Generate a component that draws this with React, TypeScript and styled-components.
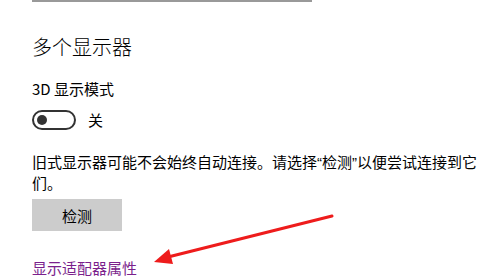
import styled, { createGlobalStyle } from 'styled-components';

const GlobalStyle = createGlobalStyle`
  html, body {
    margin: 0;
    padding: 0;
    background: #fff;
    overflow: hidden;
  }
  body {
    font-family: "Noto Sans CJK SC", "Noto Sans", sans-serif;
    color: #000;
  }
`;

const Page = styled.div`
  position: relative;
  width: 479px;
  height: 280px;
  padding-left: 32px;
  box-sizing: border-box;
`;

const TopBar = styled.div`
  width: 280px;
  height: 2px;
  background: #999;
`;

const Heading = styled.h2`
  margin: 31px 0 0;
  font-size: 20px;
  line-height: 28px;
  font-weight: 300;
`;

const Label = styled.div`
  margin-top: 18px;
  font-size: 15px;
  line-height: 20px;
`;

const ToggleRow = styled.div`
  margin-top: 11px;
  display: flex;
  align-items: center;
  gap: 12px;
  font-size: 15px;
  line-height: 20px;
`;

const Track = styled.div<{ on: boolean }>`
  box-sizing: border-box;
  width: 44px;
  height: 20px;
  border: 2px solid #333;
  border-radius: 10px;
  display: flex;
  align-items: center;
  justify-content: ${(p) => (p.on ? 'flex-end' : 'flex-start')};
  padding: 0 3px;
`;

const Knob = styled.div`
  width: 10px;
  height: 10px;
  border-radius: 50%;
  background: #333;
`;

const Text = styled.p`
  margin: 22px 0 0;
  font-size: 15px;
  line-height: 20px;
`;

const Quote = styled.span`
  font-family: "Liberation Sans", sans-serif;
`;

const Button = styled.button`
  margin-top: 6px;
  display: block;
  width: 90px;
  height: 32px;
  border: none;
  background: #ccc;
  font-family: inherit;
  font-size: 15px;
  color: #000;
  padding: 0;
`;

const Link = styled.a`
  display: block;
  margin-top: 27px;
  font-size: 15px;
  line-height: 20px;
  color: #7b1f8c;
  text-decoration: none;
`;

const Arrow = styled.svg`
  position: absolute;
  left: 0;
  top: 0;
  pointer-events: none;
`;

export default function App() {
  return (
    <>
      <GlobalStyle />
      <Page>
        <TopBar />
        <Heading>多个显示器</Heading>
        <Label>3D 显示模式</Label>
        <ToggleRow>
          <Track on={false}>
            <Knob />
          </Track>
          <span>关</span>
        </ToggleRow>
        <Text>
          旧式显示器可能不会始终自动连接。请选择<Quote>“</Quote>检测<Quote>”</Quote>以便尝试连接到它们。
        </Text>
        <Button>检测</Button>
        <Link href="#">显示适配器属性</Link>
        <Arrow width="479" height="280" viewBox="0 0 479 280">
          <line x1="332" y1="216" x2="168" y2="257" stroke="#ee1c1c" strokeWidth="3" strokeLinecap="round" />
          <polygon points="154,262 169,249 173,264" fill="#ee1c1c" />
        </Arrow>
      </Page>
    </>
  );
}
